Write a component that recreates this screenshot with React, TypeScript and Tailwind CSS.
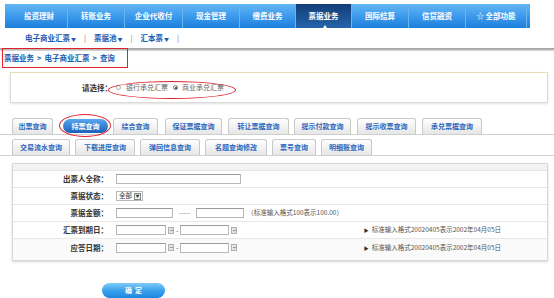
export default function App() {
  const nav = [
    { t: "投资理财", w: "w-[57px]" },
    { t: "转账业务", w: "w-[57px]" },
    { t: "企业代收付", w: "w-[58px]" },
    { t: "现金管理", w: "w-[57px]" },
    { t: "缴费业务", w: "w-[56px]" },
    { t: "票据业务", w: "w-[56px]", active: true },
    { t: "国际结算", w: "w-[57px]" },
    { t: "信贷融资", w: "w-[57px]" },
    { t: "☆ 全部功能", w: "w-[61px]" },
  ];
  const row1 = [
    { t: "出票查询", c: "ml-[12px] w-[41px]" },
    { t: "持票查询", c: "ml-[10px] w-[45px]", active: true },
    { t: "综合查询", c: "ml-[5px] w-[45px]" },
    { t: "保证票据查询", c: "ml-[7px] w-[57px]" },
    { t: "转让票据查询", c: "ml-[6px] w-[61px]" },
    { t: "提示付款查询", c: "ml-[5px] w-[57px]" },
    { t: "提示收票查询", c: "ml-[6px] w-[59px]" },
    { t: "承兑票据查询", c: "ml-[6px] w-[60px]" },
  ];
  const row2 = [
    { t: "交易流水查询", c: "ml-[12px] w-[58px]" },
    { t: "下载进度查询", c: "ml-[5px] w-[60px]" },
    { t: "弹回信息查询", c: "ml-[5px] w-[60px]" },
    { t: "名题查询修改", c: "ml-[5px] w-[62px]" },
    { t: "票号查询", c: "ml-[5px] w-[44px]" },
    { t: "明细账查询", c: "ml-[5px] w-[51px]" },
  ];

  const Tab = ({ t, c, active }: { t: string; c: string; active?: boolean }) =>
    active ? (
      <div className={`${c} relative h-[16px] flex items-center justify-center`}>
        <div className="h-[14px] w-full rounded-[7px] bg-gradient-to-b from-[#5aa8ee] to-[#1a5fba] text-white font-bold text-[7px] flex items-center justify-center">
          {t}
        </div>
        <div className="absolute left-[-4px] right-[-3px] top-[-4px] bottom-[-3px] rounded-[50%] border-[1.5px] border-[#e0202a]" />
      </div>
    ) : (
      <div
        className={`${c} h-[16px] rounded-t-[3px] border border-b-0 border-[#c9c9c9] bg-gradient-to-b from-white to-[#e6e6e6] text-[#2a68bd] font-bold text-[7px] flex items-center justify-center`}
      >
        {t}
      </div>
    );

  const Input = ({ w }: { w: string }) => (
    <div className={`${w} h-[10px] border border-[#b8b8b8] border-t-[#9a9a9a] bg-white`} />
  );
  const Cal = () => (
    <div className="ml-[2px] w-[6px] h-[7px] border border-[#b0b0b0] bg-[#e4e4e4] flex items-center justify-center">
      <div className="w-[3px] h-[1px] bg-[#999]" />
    </div>
  );

  const Label = ({ t }: { t: string }) => (
    <div className="w-[98px] shrink-0 pr-[3px] text-right font-bold text-[7.5px] text-[#333]">{t}</div>
  );

  const Hint = () => (
    <div className="ml-auto mr-[46px] text-[6.5px] text-[#555] flex items-center gap-[3px]">
      <span className="text-[5px] text-[#333]">▶</span>标准输入格式20020405表示2002年04月05日
    </div>
  );

  return (
    <div className="w-[554px] h-[298px] bg-white overflow-hidden relative font-['Noto_Sans_CJK_SC',sans-serif]">
      {/* Nav */}
      <div className="pt-[4px] pl-[5px]">
        <div className="flex h-[24px] w-[525px] pl-[6px] bg-gradient-to-b from-[#64b6f4] via-[#3d9bec] to-[#1c7fdc]">
          {nav.map((n) => (
            <div
              key={n.t}
              className={`${n.w} relative flex items-center justify-center border-r border-r-[#6ab4ef] text-[7.5px] font-bold text-white ${
                n.active ? "bg-gradient-to-b from-[#123e77] to-[#2564aa]" : ""
              }`}
            >
              {n.t}
              {n.active && (
                <div className="absolute bottom-0 left-[27px] w-0 h-0 border-l-[2px] border-r-[2px] border-b-[3px] border-l-transparent border-r-transparent border-b-white" />
              )}
            </div>
          ))}
        </div>
      </div>

      {/* Sub nav */}
      <div className="h-[20px] pl-[25px] flex items-center text-[7.5px] font-bold text-[#1c5cb0]">
        <span>电子商业汇票<span className="text-[5px] ml-[1px]">▼</span></span>
        <span className="mx-[8px] text-[#777] font-normal">|</span>
        <span>票据池<span className="text-[5px] ml-[1px]">▼</span></span>
        <span className="mx-[8px] text-[#777] font-normal">|</span>
        <span>汇本票<span className="text-[5px] ml-[1px]">▼</span></span>
        <span className="mx-[8px] text-[#777] font-normal">|</span>
      </div>

      {/* gray line */}
      <div className="h-[3px] bg-gradient-to-b from-[#9a9a9a] via-[#b8b8b8] to-[#e2e2e2]" />

      {/* breadcrumb */}
      <div className="relative h-[14px] pl-[4px] flex items-center text-[7.5px] font-bold text-[#1c5cb0]">
        票据业务 <span className="mx-[3px]">&gt;</span> 电子商业汇票 <span className="mx-[3px]">&gt;</span> 查询
        <div className="absolute left-[2px] top-[-3px] w-[126px] h-[20px] border-[1.5px] border-[#e0202a]" />
      </div>

      {/* select box */}
      <div className="relative mt-[7px] ml-[10px] w-[538px] h-[31px] border border-[#dcdcdc] border-t-[#ecd9b5] shadow-[0_1px_2px_rgba(0,0,0,0.12)] flex items-center pl-[71px] text-[7px]">
        <span className="font-bold text-[#333] text-[7.5px]">请选择：</span>
        <span className="ml-[4px] w-[5px] h-[5px] rounded-full border border-[#aaa] bg-white" />
        <span className="ml-[5px] text-[#666]">银行承兑汇票</span>
        <span className="ml-[5px] w-[5px] h-[5px] rounded-full border border-[#777] bg-white flex items-center justify-center">
          <span className="w-[2px] h-[2px] rounded-full bg-[#222]" />
        </span>
        <span className="ml-[4px] text-[#666]">商业承兑汇票</span>
        <div className="absolute left-[97px] top-[8px] w-[128px] h-[18px] rounded-[50%] border-[1.5px] border-[#e0202a]" />
      </div>

      {/* tabs */}
      <div className="mt-[15px] flex items-end border-b border-[#cfcfcf]">
        {row1.map((r) => (
          <Tab key={r.t} {...r} />
        ))}
      </div>
      <div className="mt-[4px] flex items-end border-b border-[#cfcfcf]">
        {row2.map((r) => (
          <Tab key={r.t} {...r} />
        ))}
      </div>

      {/* form table */}
      <div className="mt-[7px] ml-[12px] w-[536px] h-[98px] border border-[#d8d8d8] shadow-[0_1px_2px_rgba(0,0,0,0.18)] flex flex-col">
        <div className="h-[7px] bg-[#f3f3f3] border-b border-[#e4e4e4]" />
        <div className="h-[17px] flex items-center border-b border-[#e8e8e8]">
          <Label t="出票人全称：" />
          <div className="ml-[5px] flex items-center">
            <Input w="w-[125px]" />
          </div>
        </div>
        <div className="h-[17px] flex items-center border-b border-[#e8e8e8]">
          <Label t="票据状态：" />
          <div className="ml-[5px] h-[10px] flex items-center border border-[#b8b8b8] bg-white pl-[2px] text-[6.5px] text-[#333]">
            全部
            <span className="ml-[2px] mr-[1px] w-[7px] h-[7px] border border-[#888] bg-[#eee] flex items-center justify-center text-[4px]">▼</span>
          </div>
        </div>
        <div className="h-[17px] flex items-center border-b border-[#e8e8e8]">
          <Label t="票据金额：" />
          <div className="ml-[5px] flex items-center text-[6.5px] text-[#555]">
            <Input w="w-[57px]" />
            <span className="mx-[6px] text-[#777]">-----</span>
            <Input w="w-[48px]" />
            <span className="ml-[3px]">（标准输入格式100表示100.00）</span>
          </div>
        </div>
        <div className="h-[17px] flex items-center border-b border-[#e8e8e8]">
          <Label t="汇票到期日：" />
          <div className="ml-[5px] flex items-center text-[7px] text-[#555]">
            <Input w="w-[50px]" />
            <Cal />
            <span className="mx-[2px]">-</span>
            <Input w="w-[49px]" />
            <Cal />
          </div>
          <Hint />
        </div>
        <div className="h-[17px] flex items-center bg-[#fafafa]">
          <Label t="应答日期：" />
          <div className="ml-[5px] flex items-center text-[7px] text-[#555]">
            <Input w="w-[50px]" />
            <Cal />
            <span className="mx-[2px]">-</span>
            <Input w="w-[49px]" />
            <Cal />
          </div>
          <Hint />
        </div>
        <div className="flex-1 bg-[#fafafa]" />
      </div>

      {/* button */}
      <div className="mt-[22px] ml-[102px] w-[63px] h-[15px] rounded-full bg-gradient-to-b from-[#7dcaf7] via-[#3aa2ec] to-[#1c86de] text-white font-bold text-[7px] flex items-center justify-center">
        确&nbsp;&nbsp;定
      </div>
    </div>
  );
}
